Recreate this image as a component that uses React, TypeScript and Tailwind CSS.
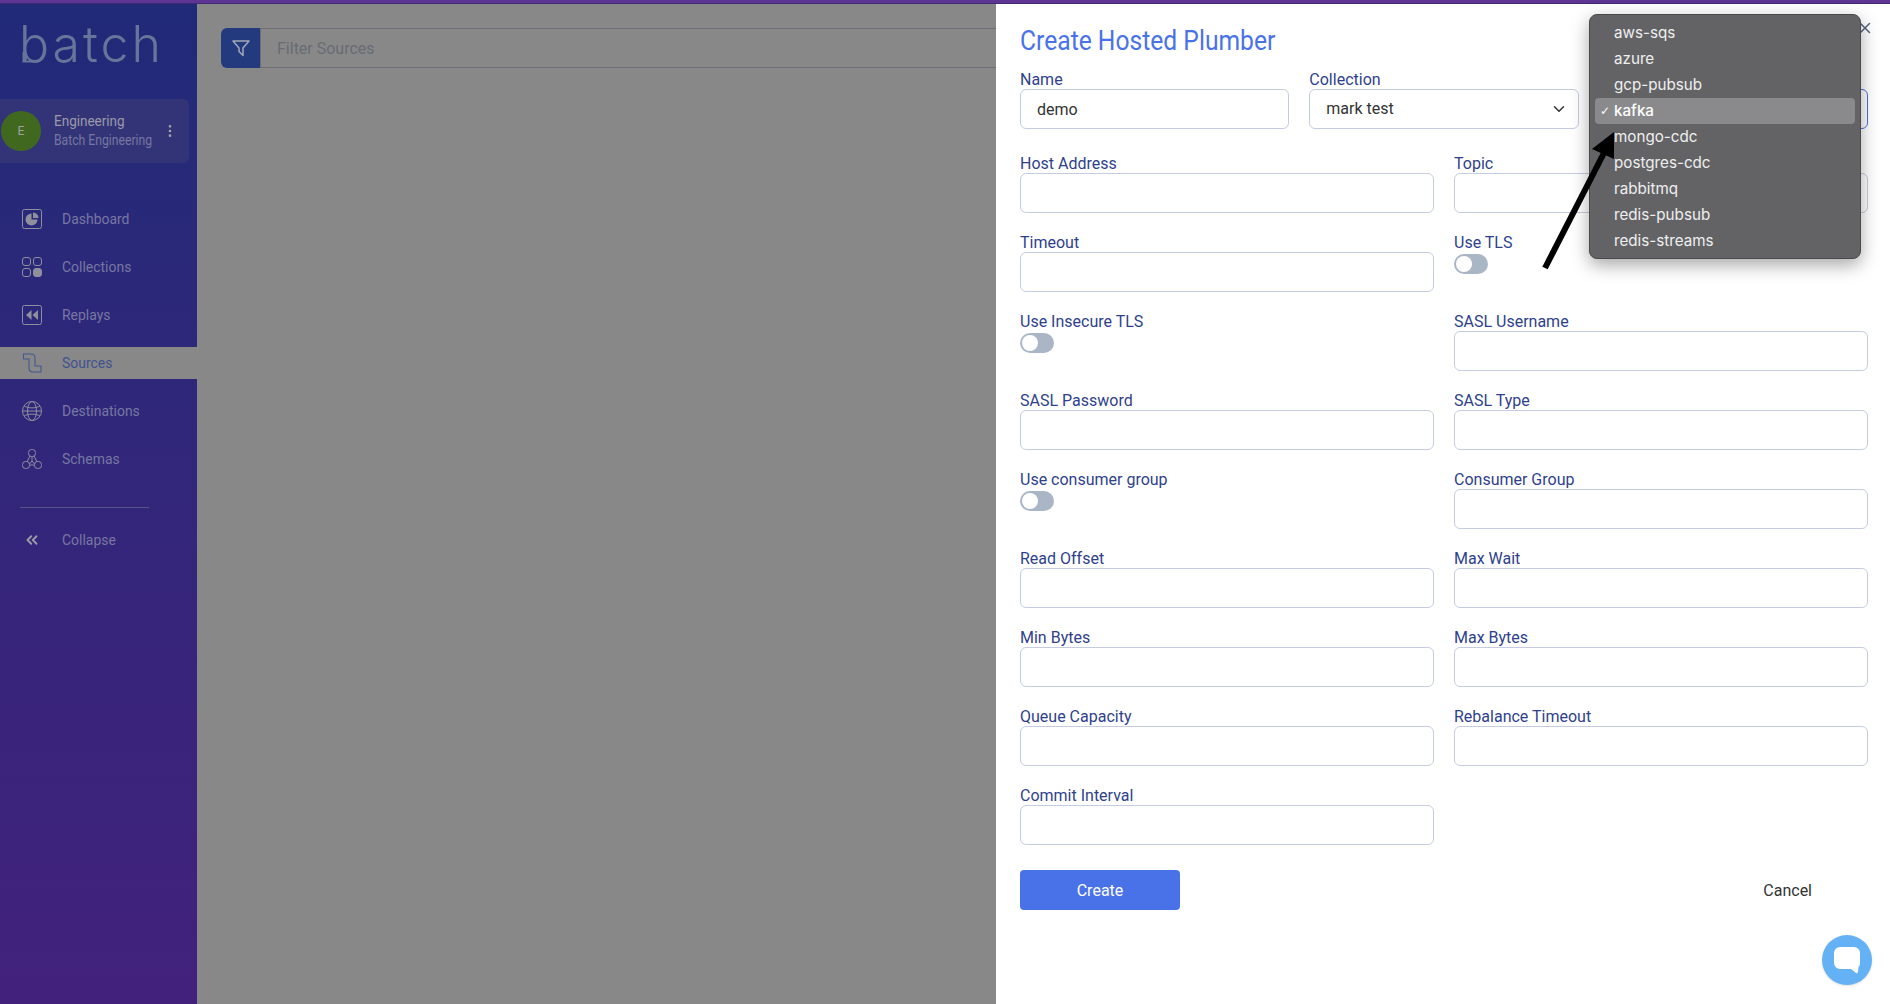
import { ChevronDown, ChevronsLeft, EllipsisVertical, X } from "lucide-react";

function DashboardIcon() {
  return (
    <svg width="20" height="20" viewBox="0 0 20 20" fill="none">
      <rect x="0.5" y="0.5" width="19" height="19" rx="2" stroke="#8f8f9e" />
      <path d="M9.500 4.500a6 6 0 1 0 6 6h-6z" fill="#8f8f9e" />
      <path d="M11 3.500a5.500 5.500 0 0 1 5.500 5.500H11z" fill="#8f8f9e" />
    </svg>
  );
}

function CollectionsIcon() {
  return (
    <svg width="20" height="20" viewBox="0 0 20 20" fill="none" stroke="#8f8f9e">
      <rect x="0.5" y="0.5" width="8" height="8" rx="2.5" />
      <rect x="11.5" y="0.5" width="8" height="8" rx="2.5" />
      <rect x="0.5" y="11.5" width="8" height="8" rx="2.5" />
      <rect x="11.5" y="11.5" width="8" height="8" rx="2.5" fill="#8f8f9e" />
    </svg>
  );
}

function ReplaysIcon() {
  return (
    <svg width="20" height="20" viewBox="0 0 20 20" fill="none">
      <rect x="0.5" y="0.5" width="19" height="19" rx="2" stroke="#8f8f9e" />
      <path d="M9.500 5v10L4 10zM16 5v10l-5.500-5z" fill="#8f8f9e" />
    </svg>
  );
}

function SourcesIcon() {
  return (
    <svg width="20" height="20" viewBox="0 0 20 20" fill="none" stroke="#44598f" strokeWidth="1.100">
      <path d="M1.500 1H9q4 0 4 4v8h6v6h-8q-4 0-4-4V6H1.500z" />
    </svg>
  );
}

function DestinationsIcon() {
  return (
    <svg width="20" height="20" viewBox="0 0 20 20" fill="none" stroke="#8f8f9e">
      <circle cx="10" cy="10" r="9.500" />
      <ellipse cx="10" cy="10" rx="4.500" ry="9.500" />
      <path d="M2 5c4 2.500 12 2.500 16 0M2 15c4-2.500 12-2.500 16 0M.5 10h19" />
    </svg>
  );
}

function SchemasIcon() {
  return (
    <svg width="20" height="20" viewBox="0 0 20 20" fill="none" stroke="#8f8f9e">
      <rect x="6.500" y="0.500" width="7" height="7" rx="3" />
      <rect x="0.500" y="12.500" width="7" height="7" rx="3" />
      <rect x="12.500" y="12.500" width="7" height="7" rx="3" />
      <path d="M8 7 5 13M12 7l3 6M10 7.500V12M7.500 16h5M10 12l-2.500 3M10 12l2.500 3" />
    </svg>
  );
}

const navItems = [
  { label: "Dashboard", icon: <DashboardIcon /> },
  { label: "Collections", icon: <CollectionsIcon /> },
  { label: "Replays", icon: <ReplaysIcon /> },
  { label: "Sources", icon: <SourcesIcon />, active: true },
  { label: "Destinations", icon: <DestinationsIcon /> },
  { label: "Schemas", icon: <SchemasIcon /> },
];

const menuItems = [
  "aws-sqs",
  "azure",
  "gcp-pubsub",
  "kafka",
  "mongo-cdc",
  "postgres-cdc",
  "rabbitmq",
  "redis-pubsub",
  "redis-streams",
];

function Sidebar() {
  return (
    <aside className="w-[197px] shrink-0 bg-gradient-to-b from-[#202a78] to-[#42217c] flex flex-col">
      {/* Logo */}
      <div className="relative h-[95px] pl-[19px] pt-[10px]">
        <span className="font-['Inter',sans-serif] font-light text-[50px] leading-[60px] text-[#66759a] tracking-[3px]">
          batch
        </span>
        <svg className="absolute left-[22px] top-[47px]" width="14" height="14" viewBox="0 0 14 14" fill="none" stroke="#66759a" strokeWidth="2">
          <path d="M1.500 1v9.500H11M1.500 10.500 6 5.500" />
        </svg>
      </div>

      {/* Org card */}
      <div className="h-[64px] w-[189px] rounded-r-md bg-[#333478] flex items-center pl-[1px] pr-[12px]">
        <div className="w-10 h-10 rounded-full bg-[#40691f] flex items-center justify-center text-[12px] text-[#a0a0a0] font-['Inter',sans-serif]">
          E
        </div>
        <div className="ml-[13px] flex-1 min-w-0">
          <div className="text-[15px] leading-[19px] text-[#9a9aa8] whitespace-nowrap origin-left scale-x-[0.9]">Engineering</div>
          <div className="text-[14px] leading-[19px] text-[#7676a0] whitespace-nowrap origin-left scale-x-[0.87]">Batch Engineering</div>
        </div>
        <EllipsisVertical size={16} color="#a3a3a8" className="shrink-0 mr-[-1px]" />
      </div>

      {/* Nav */}
      <nav className="mt-[40px] flex flex-col gap-[16px]">
        {navItems.map((item) => (
          <div
            key={item.label}
            className={`h-[32px] flex items-center pl-[22px] ${item.active ? "bg-[#888888]" : ""}`}
          >
            {item.icon}
            <span className={`ml-[20px] text-[15px] origin-left scale-x-[0.93] ${item.active ? "text-[#3f5290]" : "text-[#7777a2]"}`}>
              {item.label}
            </span>
          </div>
        ))}
      </nav>

      <div className="ml-[20px] mt-[32px] w-[129px] border-t border-[#55558a]" />

      <div className="mt-[16px] h-[32px] flex items-center pl-[23px]">
        <ChevronsLeft size={18} color="#9a9aa8" strokeWidth={2.500} />
        <span className="ml-[21px] text-[15px] origin-left scale-x-[0.93] text-[#7777a2]">Collapse</span>
      </div>
    </aside>
  );
}

function Label({ children }: { children: string }) {
  return <div className="h-[20px] text-[16px] leading-[22px] text-[#2f3f8c]">{children}</div>;
}

function Field({ label, value }: { label: string; value?: string }) {
  return (
    <div className="min-w-0">
      <Label>{label}</Label>
      <input
        readOnly
        value={value ?? ""}
        className="w-full h-10 rounded-[6px] border border-[#c5cce0] bg-white px-[16px] text-[16px] text-[#333333] outline-none"
      />
    </div>
  );
}

function Toggle({ label }: { label: string }) {
  return (
    <div>
      <Label>{label}</Label>
      <div className="mt-[2px] w-[34px] h-[20px] rounded-full bg-[#aab6c6] flex items-center pl-[2px]">
        <div className="w-4 h-4 rounded-full bg-white" />
      </div>
    </div>
  );
}

function HostedPlumberPanel() {
  return (
    <section className="w-[894px] shrink-0 bg-white pl-[24px] pr-[22px] pt-[22px]">
      <h1 className="w-fit h-[30px] mb-[13px] text-[28px] leading-[30px] text-[#4a72e8] whitespace-nowrap origin-left scale-x-[0.88]">
        Create Hosted Plumber
      </h1>

      <div className="grid grid-cols-3 gap-x-[20px]">
        <Field label="Name" value="demo" />
        <div>
          <Label>Collection</Label>
          <div className="h-10 rounded-[6px] border border-[#c5cce0] flex items-center justify-between pl-[16px] pr-[10px] pb-[1px] text-[16px] text-[#333333]">
            mark test
            <ChevronDown size={18} color="#333333" />
          </div>
        </div>
        {/* third select sits under the open menu, only its focus ring shows */}
        <div className="pt-[20px]">
          <div className="h-10 rounded-[6px] border border-[#4a72e8]" />
        </div>
      </div>

      <div className="mt-[24px] grid grid-cols-2 gap-x-[20px] gap-y-[19px]">
        <Field label="Host Address" />
        <Field label="Topic" />
        <Field label="Timeout" />
        <Toggle label="Use TLS" />
        <Toggle label="Use Insecure TLS" />
        <Field label="SASL Username" />
        <Field label="SASL Password" />
        <Field label="SASL Type" />
        <Toggle label="Use consumer group" />
        <Field label="Consumer Group" />
        <Field label="Read Offset" />
        <Field label="Max Wait" />
        <Field label="Min Bytes" />
        <Field label="Max Bytes" />
        <Field label="Queue Capacity" />
        <Field label="Rebalance Timeout" />
        <Field label="Commit Interval" />
      </div>

      <div className="mt-[25px] flex items-center justify-between">
        <button className="w-[160px] h-10 pt-[1px] rounded-[4px] bg-[#4a72e8] text-[16px] text-white">Create</button>
        <button className="mr-[56px] pt-[2px] text-[16px] text-[#333333]">Cancel</button>
      </div>
    </section>
  );
}

export default function App() {
  return (
    <div className="relative h-[1004px] w-full overflow-hidden flex flex-col bg-[#888888] font-['Roboto',sans-serif]">
      <div className="h-[4px] shrink-0 bg-[#5e3594] border-b border-[#3e2a70]" />

      <div className="flex-1 flex min-h-0">
        <Sidebar />

        <main className="flex-1 min-w-0 pl-[24px] pt-[24px]">
          <div className="flex h-[40px]">
            <div className="w-[39px] shrink-0 rounded-l-[6px] bg-[#233a7f] flex items-center justify-center">
              <svg width="18" height="18" viewBox="0 0 18 18" fill="none" stroke="#a3a9b8" strokeWidth="1.500" strokeLinejoin="round">
                <path d="M1 2h16l-6 7v7.500L7 12.500V9z" />
              </svg>
            </div>
            <div className="flex-1 border-y border-l border-[#6f6f78] pl-[16px] pt-[2px] flex items-center text-[16px] text-[#696b75]">
              Filter Sources
            </div>
          </div>
        </main>

        <HostedPlumberPanel />
      </div>

      {/* Close */}
      <X size={18} color="#5a6478" className="absolute left-[1856px] top-[19px]" />

      {/* Native select menu */}
      <div className="absolute left-[1589px] top-[14px] w-[272px] h-[245px] rounded-[8px] border border-[#4a4a4c] bg-[#636366] px-[5px] py-[5px] shadow-[0_6px_18px_rgba(0,0,0,0.35)] font-['Inter',sans-serif] text-[15.2px] text-[#efefef]">
        {menuItems.map((item) => (
          <div
            key={item}
            className={`relative h-[26px] rounded-[4px] pl-[19px] flex items-center ${item === "kafka" ? "bg-[#8a8a8d] text-white font-medium" : ""}`}
          >
            {item === "kafka" && <span className="absolute left-[5px] text-[12px] font-normal font-['DejaVu_Sans',sans-serif]">✓</span>}
            {item}
          </div>
        ))}
      </div>

      {/* Annotation arrow */}
      <svg className="absolute left-[1540px] top-[125px]" width="80" height="150" viewBox="0 0 80 150" fill="none">
        <path d="M5 143 66 24" stroke="#000000" strokeWidth="6" />
        <path d="M74 7 52 24 74 34z" fill="#000000" />
      </svg>

      {/* Chat widget */}
      <div className="absolute left-[1822px] top-[935px] w-[50px] h-[50px] rounded-full bg-[#64b1f5] flex items-center justify-center shadow-sm">
        <svg width="28" height="28" viewBox="0 0 28 28">
          <path d="M7 1h14a6 6 0 0 1 6 6v10c0 2-.500 3-1.500 4l-.500 5c-.200 1-1 1.500-2 1l-5-4H7a6 6 0 0 1-6-6V7a6 6 0 0 1 6-6z" fill="#ffffff" />
        </svg>
      </div>
    </div>
  );
}
